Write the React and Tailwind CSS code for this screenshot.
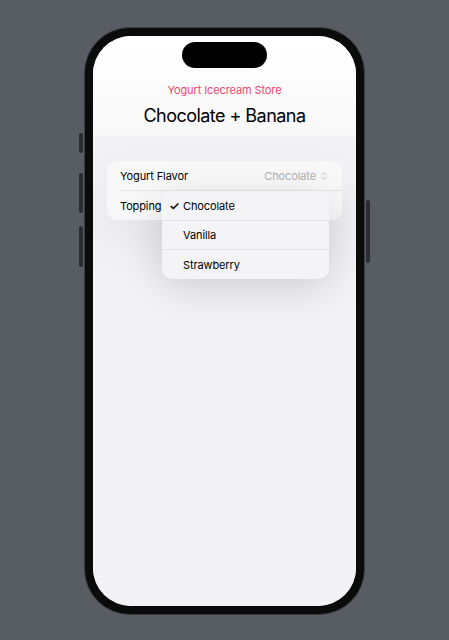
import { ChevronsUpDown } from "lucide-react";

const toppings = ["Chocolate", "Vanilla", "Strawberry"];

function SideButton({ className }) {
  return <div className={`absolute w-[4px] rounded-sm bg-[#2a2c30] ${className}`} />;
}

export default function App() {
  return (
    <div
      className="flex h-[640px] w-[449px] justify-center bg-[#585d64] pt-[27px]"
      style={{ fontFamily: "Inter, 'Noto Sans', sans-serif" }}
    >
      <div className="relative h-[588px] w-[281px]">
        <SideButton className="left-[-5px] top-[106px] h-[20px]" />
        <SideButton className="left-[-5px] top-[146px] h-[40px]" />
        <SideButton className="left-[-5px] top-[199px] h-[41px]" />
        <SideButton className="right-[-5px] top-[173px] h-[63px]" />

        <div className="h-full w-full rounded-[46px] border border-[#3a3d42] bg-[#0b0b0c] p-[8px]">
          <div className="relative flex h-full w-full flex-col overflow-hidden rounded-[38px] bg-[#f2f2f7]">
            <div className="flex h-[100px] flex-col items-center bg-gradient-to-b from-white to-[#f8f8f9] pt-[6px]">
              <div className="h-[26px] w-[85px] rounded-full bg-black" />
              <p className="mt-[14px] text-[11px] leading-[16px] tracking-[-0.01em] text-[#f0476c]">
                Yogurt Icecream Store
              </p>
              <h1 className="mt-[6px] text-[18px] leading-[24px] tracking-[-0.03em] text-black">
                Chocolate + Banana
              </h1>
            </div>

            <div className="flex-1 bg-[#f2f2f7] px-[14px] pt-[25px]">
              <div className="relative rounded-[10px] bg-[#f8f8f9] shadow-[0_20px_60px_rgba(0,0,0,0.08)]">
                <div className="flex h-[29px] items-center justify-between pl-[13px] pr-[13px] pt-[1px]">
                  <span className="text-[11px] tracking-[-0.01em] text-black">Yogurt Flavor</span>
                  <span className="flex items-center gap-[3px] text-[11px] tracking-[-0.01em] text-[#afafb4]">
                    Chocolate
                    <ChevronsUpDown size={10} strokeWidth={2} />
                  </span>
                </div>
                <div className="ml-[13px] h-px bg-[#e4e4e7]" />
                <div className="flex h-[29px] items-center pl-[13px] pt-[1px]">
                  <span className="text-[11px] tracking-[-0.01em] text-black">Topping</span>
                </div>

                <div className="absolute left-[55px] top-[30px] w-[167px] overflow-hidden rounded-[10px] bg-[#f4f4f6] shadow-[0_10px_40px_rgba(0,0,0,0.14)]">
                  {toppings.map((item, index) => (
                    <div key={item}>
                      {index > 0 ? <div className="h-px bg-[#e2e2e5]" /> : null}
                      <div className="flex h-[28.5px] items-center pt-[1px]">
                        <span className="w-[21px] pl-[7px] text-[12px] font-semibold text-black">
                          {index === 0 ? "✓" : ""}
                        </span>
                        <span className="text-[11px] tracking-[-0.01em] text-black">{item}</span>
                      </div>
                    </div>
                  ))}
                </div>
              </div>
            </div>
          </div>
        </div>
      </div>
    </div>
  );
}
